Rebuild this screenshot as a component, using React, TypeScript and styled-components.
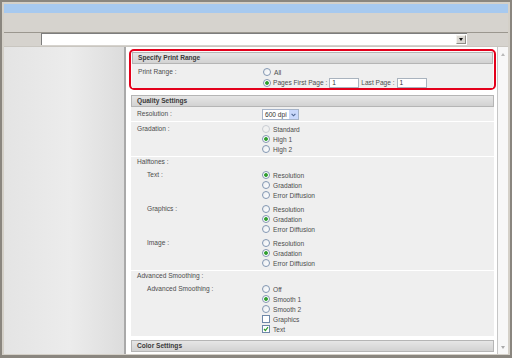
import React from 'react';
import styled, { createGlobalStyle } from 'styled-components';

const Global = createGlobalStyle`
  html, body { margin: 0; padding: 0; background: #fff; }
  body { font-family: "Liberation Sans", Arial, sans-serif; -webkit-font-smoothing: antialiased; }
  * { box-sizing: border-box; }
`;

const Window = styled.div`
  width: 512px;
  height: 358px;
  display: flex;
  flex-direction: column;
  background: #d4d0c8;
  border: 2px solid #8a867f;
  border-bottom-width: 3px;
  padding: 2px 2px 1px 2px;
  overflow: hidden;
`;

const TitleBar = styled.div`
  height: 9px;
  flex: none;
  background: #a7c9ef;
`;

const Toolbar = styled.div`
  height: 20px;
  flex: none;
  background: #d6d3ce;
  border-bottom: 1px solid #9b978f;
`;

const AddressRow = styled.div`
  height: 13px;
  flex: none;
  display: flex;
  background: #d6d3ce;
`;

const AddressLead = styled.div`
  width: 37px;
  flex: none;
`;

const AddressInput = styled.div`
  width: 426px;
  height: 12px;
  background: #fff;
  border-left: 1px solid #7d7d7d;
  border-top: 1px solid #7d7d7d;
  display: flex;
  justify-content: flex-end;
  align-items: center;
  padding-right: 1px;
`;

const DropButton = styled.div`
  width: 10px;
  height: 9px;
  background: #dcd9d3;
  border: 1px solid #8f8c86;
  border-top-color: #f4f2ee;
  border-left-color: #f4f2ee;
  display: flex;
  align-items: center;
  justify-content: center;
  &::after {
    content: '';
    border-left: 2.5px solid transparent;
    border-right: 2.5px solid transparent;
    border-top: 3px solid #111;
  }
`;

const Body = styled.div`
  flex: 1;
  display: flex;
  min-height: 0;
  border-top: 1px solid #c9c6c0;
`;

const Sidebar = styled.div`
  width: 122px;
  flex: none;
  background: linear-gradient(to right, #e4e4e4, #ececec 55%, #dcdcdc);
  border-right: 2px solid #a9a9a9;
`;

const Main = styled.div`
  width: 371px;
  flex: none;
  background: #fff;
  padding: 2px 1px 0 3px;
  overflow: hidden;
  display: flex;
  flex-direction: column;
`;

const Scrollbar = styled.div`
  width: 11px;
  flex: none;
  background: #f7f7f7;
  border-left: 1px solid #c6c6c6;
  display: flex;
  flex-direction: column;
  justify-content: space-between;
  align-items: center;
  padding: 6px 0 5px;
`;

const ScrollArrow = styled.div<{ $down?: boolean }>`
  width: 0;
  height: 0;
  border-left: 2px solid transparent;
  border-right: 2px solid transparent;
  ${p => (p.$down ? 'border-top: 3px solid #a9a9a9;' : 'border-bottom: 3px solid #b9b9b9;')}
`;

const HighlightPanel = styled.div`
  border: 2px solid #e3001b;
  border-radius: 5px;
  padding: 1px 1px 0;
  background: #fbfbfb;
  flex: none;
`;

const Panel = styled.div<{ $mt?: number }>`
  margin: ${p => p.$mt ?? 5}px 2px 0;
  background: #efefef;
  flex: none;
`;

const PanelHeader = styled.div`
  height: 12px;
  background: linear-gradient(#e6e6e6, #d2d2d2);
  border: 1px solid #b5b5b5;
  font-size: 6.6px;
  font-weight: bold;
  line-height: 10px;
  color: #3a3a3a;
  padding-left: 5px;
`;

const PanelBody = styled.div`
  background: #efefef;
  padding: 3px 0 0;
`;

const Section = styled.div<{ $pt?: number; $pb?: number }>`
  padding-top: ${p => p.$pt ?? 2}px;
  padding-bottom: ${p => p.$pb ?? 2}px;
  & + & { border-top: 1px solid #fff; }
  display: flex;
  flex-direction: column;
`;

const Row = styled.div<{ $mt?: number }>`
  display: grid;
  grid-template-columns: 125px 1fr;
  padding-left: 6px;
  margin-top: ${p => p.$mt ?? 0}px;
`;

const Label = styled.div<{ $indent?: number; $top?: number }>`
  font-size: 6.6px;
  line-height: 10px;
  height: 10px;
  margin-top: ${p => p.$top ?? 0}px;
  color: #4d4d4d;
  padding-left: ${p => p.$indent ?? 0}px;
  white-space: nowrap;
`;

const Options = styled.div`
  display: flex;
  flex-direction: column;
`;

const Option = styled.div<{ $h?: number; $gap?: number }>`
  display: flex;
  align-items: center;
  gap: ${p => p.$gap ?? 3}px;
  height: ${p => p.$h ?? 10}px;
  font-size: 6.6px;
  color: #4d4d4d;
  white-space: nowrap;
`;

const Radio = styled.span<{ $checked?: boolean; $disabled?: boolean }>`
  width: 8px;
  height: 8px;
  flex: none;
  border-radius: 50%;
  border: 1px solid ${p => (p.$disabled ? '#c9cdd3' : '#8397b2')};
  background: ${p =>
    p.$checked
      ? 'radial-gradient(circle, #2f9e2f 0 1.5px, #b9dcb9 1.9px, #fff 2.4px)'
      : p.$disabled
      ? '#f1f1f1'
      : 'linear-gradient(135deg, #e9ecef, #fff)'};
`;

const Check = styled.span`
  width: 8px;
  height: 8px;
  flex: none;
  border: 1px solid #6f88a8;
  background: #fff;
  display: flex;
  align-items: center;
  justify-content: center;
`;

const TextInput = styled.span`
  width: 30px;
  height: 10px;
  border: 1px solid #a9b3be;
  background: #fff;
  font-size: 6.6px;
  line-height: 8px;
  padding-left: 2px;
  color: #333;
`;

const Select = styled.div`
  margin-top: 2px;
  width: 37px;
  height: 11px;
  border: 1px solid #a6b4c9;
  background: #fff;
  display: flex;
  align-items: center;
  justify-content: space-between;
  font-size: 6.6px;
  color: #333;
  padding-left: 2px;
`;

const SelectButton = styled.span`
  width: 9px;
  height: 9px;
  background: #c9d8fb;
  display: flex;
  align-items: center;
  justify-content: center;
`;

const Spacer = styled.div<{ $h: number }>`
  height: ${p => p.$h}px;
`;

const CheckMark = () => (
  <svg width="6" height="6" viewBox="0 0 6 6">
    <path d="M1 3 L2.4 4.5 L5 1.2" fill="none" stroke="#2c9a2c" strokeWidth="1.2" />
  </svg>
);

const Chevron = () => (
  <svg width="5" height="4" viewBox="0 0 5 4">
    <path d="M0.6 0.8 L2.5 2.8 L4.4 0.8" fill="none" stroke="#4d6591" strokeWidth="1.1" />
  </svg>
);

type Opt = { label: string; checked?: boolean; disabled?: boolean };

const RadioGroup = ({ opts }: { opts: Opt[] }) => (
  <Options>
    {opts.map(o => (
      <Option key={o.label}>
        <Radio $checked={o.checked} $disabled={o.disabled} />
        <span>{o.label}</span>
      </Option>
    ))}
  </Options>
);

const halftone = (checked: number): Opt[] =>
  ['Resolution', 'Gradation', 'Error Diffusion'].map((l, i) => ({ label: l, checked: i === checked }));

export default function App() {
  return (
    <>
      <Global />
      <Window>
        <TitleBar />
        <Toolbar />
        <AddressRow>
          <AddressLead />
          <AddressInput>
            <DropButton />
          </AddressInput>
        </AddressRow>
        <Body>
          <Sidebar />
          <Main>
            <HighlightPanel>
              <PanelHeader>Specify Print Range</PanelHeader>
              <PanelBody>
                <Row>
                  <Label>Print Range :</Label>
                  <Options>
                    <Option>
                      <Radio />
                      <span>All</span>
                    </Option>
                    <Option $h={11} $gap={2}>
                      <Radio $checked />
                      <span>Pages First Page :</span>
                      <TextInput>1</TextInput>
                      <span>Last Page :</span>
                      <TextInput>1</TextInput>
                    </Option>
                  </Options>
                </Row>
              </PanelBody>
            </HighlightPanel>

            <Panel>
              <PanelHeader>Quality Settings</PanelHeader>
              <Section $pt={0} $pb={0}>
                <Row>
                  <Label $top={2}>Resolution :</Label>
                  <Options>
                    <Select>
                      <span>600 dpi</span>
                      <SelectButton>
                        <Chevron />
                      </SelectButton>
                    </Select>
                    <Spacer $h={1} />
                  </Options>
                </Row>
              </Section>
              <Section>
                <Row>
                  <Label>Gradation :</Label>
                  <RadioGroup
                    opts={[
                      { label: 'Standard', disabled: true },
                      { label: 'High 1', checked: true },
                      { label: 'High 2' },
                    ]}
                  />
                </Row>
              </Section>
              <Section $pt={0}>
                <Row>
                  <Label>Halftones :</Label>
                </Row>
                <Row $mt={3}>
                  <Label $indent={10}>Text :</Label>
                  <RadioGroup opts={halftone(0)} />
                </Row>
                <Row $mt={4}>
                  <Label $indent={10}>Graphics :</Label>
                  <RadioGroup opts={halftone(1)} />
                </Row>
                <Row $mt={4}>
                  <Label $indent={10}>Image :</Label>
                  <RadioGroup opts={halftone(1)} />
                </Row>
              </Section>
              <Section $pt={0}>
                <Row>
                  <Label>Advanced Smoothing :</Label>
                </Row>
                <Row $mt={3}>
                  <Label $indent={10}>Advanced Smoothing :</Label>
                  <Options>
                    <Option>
                      <Radio />
                      <span>Off</span>
                    </Option>
                    <Option>
                      <Radio $checked />
                      <span>Smooth 1</span>
                    </Option>
                    <Option>
                      <Radio />
                      <span>Smooth 2</span>
                    </Option>
                    <Option>
                      <Check />
                      <span>Graphics</span>
                    </Option>
                    <Option>
                      <Check>
                        <CheckMark />
                      </Check>
                      <span>Text</span>
                    </Option>
                  </Options>
                </Row>
              </Section>
            </Panel>

            <Panel $mt={4}>
              <PanelHeader>Color Settings</PanelHeader>
            </Panel>
          </Main>
          <Scrollbar>
            <ScrollArrow />
            <ScrollArrow $down />
          </Scrollbar>
        </Body>
      </Window>
    </>
  );
}
